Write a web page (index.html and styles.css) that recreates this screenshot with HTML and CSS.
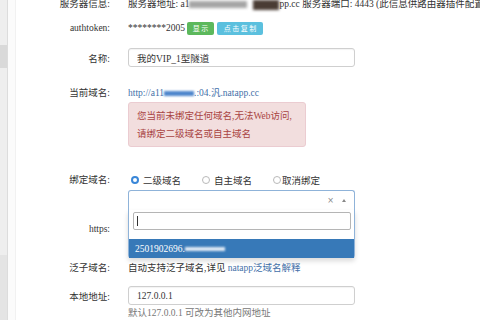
FILE: index.html
```html
<!DOCTYPE html>
<html lang="zh">
<head>
<meta charset="utf-8">
<title>隧道配置</title>
<link rel="stylesheet" href="styles.css">
</head>
<body>
<div class="app">
  <aside class="side"><div class="side-block"></div><div class="side-bottom"></div></aside>
  <div class="gutter"></div>
  <main class="form">
    <div class="row r-info">
      <div class="label">服务器信息:</div>
      <div class="value nowrap">服务器地址: a1<span class="blur-gray"></span><span class="blur-photo"></span>pp.cc 服务器端口: 4443 (此信息供路由器插件配置填写)</div>
    </div>
    <div class="row r-token">
      <div class="label">authtoken:</div>
      <div class="value token">********2005<span class="btn btn-green">显 示</span><span class="btn btn-blue">点 击 复 制</span></div>
    </div>
    <div class="row r-name">
      <div class="label">名称:</div>
      <div class="value"><div class="input">我的VIP_1型隧道</div></div>
    </div>
    <div class="row r-domain">
      <div class="label">当前域名:</div>
      <div class="value"><span class="link">http://a11<span class="blur-blue"></span>.:04.汎.natapp.cc</span></div>
    </div>
    <div class="row r-alert">
      <div class="label"></div>
      <div class="value"><div class="alert">您当前未绑定任何域名,无法Web访问,<br>请绑定二级域名或自主域名</div></div>
    </div>
    <div class="row r-bind">
      <div class="label top">绑定域名:</div>
      <div class="value">
        <div class="radios">
          <span class="radio checked"></span><span class="rtext">二级域名</span>
          <span class="radio"></span><span class="rtext">自主域名</span>
          <span class="radio"></span><span class="rtext tight">取消绑定</span>
        </div>
        <div class="select-wrap">
          <div class="select"><span class="clear">×</span><span class="arrow"></span></div>
          <div class="dropdown">
            <div class="search"><span class="caret"></span></div>
            <div class="option">2501902696.<span class="blur-white"></span></div>
          </div>
        </div>
      </div>
    </div>
    <div class="row r-https">
      <div class="label">https:</div>
      <div class="value"></div>
    </div>
    <div class="row r-wild">
      <div class="label">泛子域名:</div>
      <div class="value">自动支持泛子域名,详见 <span class="link">natapp泛域名解释</span></div>
    </div>
    <div class="row r-local">
      <div class="label">本地地址:</div>
      <div class="value"><div class="input">127.0.0.1</div></div>
    </div>
    <div class="row r-help">
      <div class="label"></div>
      <div class="value help">默认127.0.0.1 可改为其他内网地址</div>
    </div>
  </main>
</div>
</body>
</html>
```
FILE: styles.css
```css
body {
  margin: 0;
  font-family: "Liberation Serif", "Noto Sans CJK SC", serif;
  font-size: 9.5px;
  color: #333;
  background: #fff;
  overflow: hidden;
}
.app {
  display: flex;
  height: 320px;
  overflow: hidden;
}
.side {
  width: 7px;
  flex: none;
  background: #eeeeee;
  border-right: 1px solid #dcdcdc;
  display: flex;
  flex-direction: column;
}
.side-block {
  margin-top: 45px;
  height: 23px;
  background: #d9d9d9;
}
.side-bottom {
  margin-top: auto;
  height: 65px;
  background: #e4e4e4;
}
.gutter {
  width: 7px;
  flex: none;
  background: #fbfbfb;
  border-right: 1px solid #f1f1f1;
}
.form {
  flex: 1;
  min-width: 0;
  margin-top: -7px;
}
.row {
  display: grid;
  grid-template-columns: 94px 227px;
  column-gap: 18px;
  align-items: center;
}
.label {
  text-align: right;
  white-space: nowrap;
}
.label.top {
  align-self: start;
  line-height: 16px;
}
.nowrap { white-space: nowrap; }
.r-info { height: 20px; margin-bottom: 5px; }
.r-token { height: 20px; margin-bottom: 10px; }
.r-name { height: 19px; margin-bottom: 17px; }
.r-domain { height: 16px; margin-bottom: 2px; }
.r-alert { margin-bottom: 25px; }
.r-bind { align-items: start; }
.r-https { height: 20px; margin-top: 9px; margin-bottom: 20px; }
.r-wild { height: 16px; margin-bottom: 11px; }
.r-local { height: 19px; }
.r-help { margin-top: 1px; line-height: 14px; }

.blur-gray {
  display: inline-block;
  width: 58px;
  height: 7px;
  background: #a5a5a5;
  filter: blur(1.5px);
  vertical-align: middle;
}
.blur-photo {
  display: inline-block;
  width: 26px;
  height: 10px;
  background: #4a3c34;
  filter: blur(1.5px);
  vertical-align: middle;
  margin-left: 6px;
}
.blur-blue {
  display: inline-block;
  width: 30px;
  height: 5px;
  background: #4f86cc;
  filter: blur(1.2px);
  vertical-align: middle;
}
.blur-white {
  display: inline-block;
  width: 40px;
  height: 4px;
  background: #dfe9f5;
  filter: blur(1.2px);
  vertical-align: middle;
}
.token {
  display: flex;
  align-items: center;
}
.btn {
  display: inline-flex;
  align-items: center;
  justify-content: center;
  height: 13px;
  color: #fff;
  font-family: "Noto Sans CJK SC", sans-serif;
  font-size: 7px;
  border-radius: 2px;
  white-space: nowrap;
}
.btn-green { background: #5cb85c; margin-left: 2px; width: 27px; }
.btn-blue { background: #5bc0de; margin-left: 3px; width: 46px; }
.input {
  box-sizing: border-box;
  height: 19px;
  border: 1px solid #cfcfcf;
  border-radius: 3px;
  padding: 0 8px;
  display: flex;
  align-items: center;
  box-shadow: inset 0 1px 1px rgba(0,0,0,0.05);
}
.link { color: #3f6fa8; }
.alert {
  box-sizing: border-box;
  width: 178px;
  height: 45px;
  background: #f2dede;
  border: 1px solid #ebccd1;
  border-radius: 3px;
  color: #a94442;
  padding: 4px 8px;
  line-height: 18px;
}
.radios {
  display: flex;
  align-items: center;
  height: 16px;
}
.radio {
  box-sizing: border-box;
  width: 8px;
  height: 8px;
  border: 1px solid #b9b9b9;
  border-radius: 50%;
  margin-left: 3px;
  background: #fff;
}
.radio.checked {
  border: 2.5px solid #3a87d8;
  background: #fff;
}
.rtext { margin-left: 4px; margin-right: 18px; }
.rtext.tight { margin-left: 1px; }
.select-wrap {
  position: relative;
  margin-top: 2px;
}
.select {
  box-sizing: border-box;
  height: 20px;
  border: 1px solid #8fb3d9;
  border-bottom: none;
  border-radius: 3px 3px 0 0;
  background: #fff;
  display: flex;
  align-items: center;
  justify-content: flex-end;
  padding-right: 8px;
}
.clear {
  color: #888;
  font-family: "DejaVu Sans", sans-serif;
  font-size: 8px;
  margin-right: 8px;
}
.arrow {
  width: 0;
  height: 0;
  border-left: 2.5px solid transparent;
  border-right: 2.5px solid transparent;
  border-bottom: 3px solid #888;
}
.dropdown {
  position: absolute;
  z-index: 5;
  top: 100%;
  left: 0;
  right: 0;
  box-sizing: border-box;
  height: 48px;
  background: #fff;
  border: 1px solid #8fb3d9;
  border-top: none;
  border-radius: 0 0 3px 3px;
  box-shadow: 0 3px 5px rgba(0,0,0,0.15);
  padding-top: 2px;
}
.search {
  box-sizing: border-box;
  height: 18px;
  margin: 0 3px 0 4px;
  border: 1px solid #b5b5b5;
  border-radius: 2px;
  display: flex;
  align-items: center;
  padding-left: 3px;
}
.caret {
  width: 1px;
  height: 10px;
  background: #333;
}
.option {
  margin-top: 9px;
  height: 19px;
  background: #3779b8;
  color: #fff;
  display: flex;
  align-items: center;
  padding-left: 6px;
}
.help { color: #777; }
```
